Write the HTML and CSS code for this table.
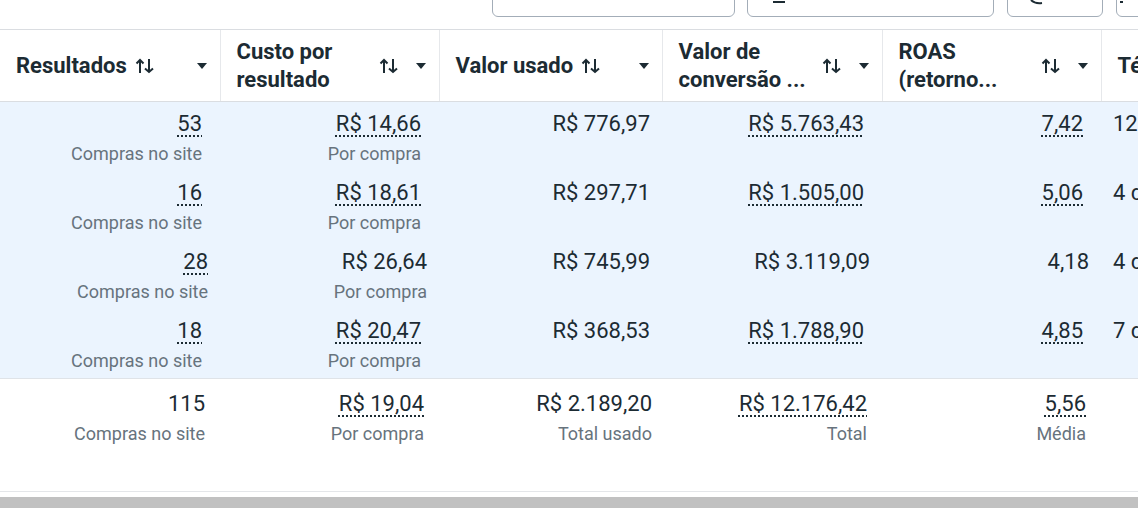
FILE: index.html
```html
<!DOCTYPE html>
<html lang="pt-BR">
<head>
    <meta charset="UTF-8">
    <meta name="viewport" content="width=device-width, initial-scale=1.0">
    <link rel="stylesheet" href="styles.css">
    <title>Relatório de anúncios</title>
</head>
<body>
    <div class="toolbar">
        <div class="tool-btn btn-wide"></div>
        <div class="tool-btn btn-wider">
            <svg class="peek peek-bar" width="14" height="4" viewBox="0 0 14 4"><rect x="0" y="0" width="12" height="2" fill="#1c2b33"/></svg>
        </div>
        <div class="tool-btn btn-small">
            <svg class="peek peek-curve" width="14" height="6" viewBox="0 0 14 6"><path d="M1 0 Q5 4 12 3" fill="none" stroke="#1c2b33" stroke-width="2"/></svg>
        </div>
        <div class="tool-btn btn-cut">
            <svg class="peek peek-dot" width="6" height="4" viewBox="0 0 6 4"><rect x="0" y="0" width="3" height="2" fill="#1c2b33"/></svg>
        </div>
    </div>

    <div class="table-wrap">
    <table class="report">
        <colgroup>
            <col style="width:220px">
            <col style="width:219px">
            <col style="width:223px">
            <col style="width:220px">
            <col style="width:219px">
            <col style="width:220px">
        </colgroup>
        <thead>
            <tr>
                <th>
                    <div class="head">
                        <span class="label">Resultados</span>
                        <svg class="sort" width="20" height="16" viewBox="0 0 20 16"><path d="M5 15V2M1.5 5.5L5 2l3.5 3.5M14 1v13M10 10.5l4 3.5 4-3.5" fill="none" stroke="#1c2b33" stroke-width="2"/></svg>
                        <svg class="caret" width="10" height="6" viewBox="0 0 10 6"><path d="M0 0h10L5 6z" fill="#1c2b33"/></svg>
                    </div>
                </th>
                <th>
                    <div class="head">
                        <span class="label wrap">Custo por<br>resultado</span>
                        <svg class="sort" width="20" height="16" viewBox="0 0 20 16"><path d="M5 15V2M1.5 5.5L5 2l3.5 3.5M14 1v13M10 10.5l4 3.5 4-3.5" fill="none" stroke="#1c2b33" stroke-width="2"/></svg>
                        <svg class="caret" width="10" height="6" viewBox="0 0 10 6"><path d="M0 0h10L5 6z" fill="#1c2b33"/></svg>
                    </div>
                </th>
                <th>
                    <div class="head">
                        <span class="label">Valor usado</span>
                        <svg class="sort" width="20" height="16" viewBox="0 0 20 16"><path d="M5 15V2M1.5 5.5L5 2l3.5 3.5M14 1v13M10 10.5l4 3.5 4-3.5" fill="none" stroke="#1c2b33" stroke-width="2"/></svg>
                        <svg class="caret" width="10" height="6" viewBox="0 0 10 6"><path d="M0 0h10L5 6z" fill="#1c2b33"/></svg>
                    </div>
                </th>
                <th>
                    <div class="head">
                        <span class="label wrap">Valor de<br>conversão ...</span>
                        <svg class="sort" width="20" height="16" viewBox="0 0 20 16"><path d="M5 15V2M1.5 5.5L5 2l3.5 3.5M14 1v13M10 10.5l4 3.5 4-3.5" fill="none" stroke="#1c2b33" stroke-width="2"/></svg>
                        <svg class="caret" width="10" height="6" viewBox="0 0 10 6"><path d="M0 0h10L5 6z" fill="#1c2b33"/></svg>
                    </div>
                </th>
                <th>
                    <div class="head">
                        <span class="label wrap">ROAS<br>(retorno...</span>
                        <svg class="sort" width="20" height="16" viewBox="0 0 20 16"><path d="M5 15V2M1.5 5.5L5 2l3.5 3.5M14 1v13M10 10.5l4 3.5 4-3.5" fill="none" stroke="#1c2b33" stroke-width="2"/></svg>
                        <svg class="caret" width="10" height="6" viewBox="0 0 10 6"><path d="M0 0h10L5 6z" fill="#1c2b33"/></svg>
                    </div>
                </th>
                <th>
                    <div class="head">
                        <span class="label">Término</span>
                    </div>
                </th>
            </tr>
        </thead>
        <tbody>
            <tr class="sel">
                <td class="inset"><div class="val"><span class="dot">53</span></div><div class="sub">Compras no site</div></td>
                <td class="inset"><div class="val"><span class="dot">R$ 14,66</span></div><div class="sub">Por compra</div></td>
                <td><div class="val">R$ 776,97</div></td>
                <td class="inset"><div class="val"><span class="dot">R$ 5.763,43</span></div></td>
                <td class="inset"><div class="val"><span class="dot">7,42</span></div></td>
                <td class="left"><div class="val">12 de dez. de 2023</div></td>
            </tr>
            <tr class="sel">
                <td class="inset"><div class="val"><span class="dot">16</span></div><div class="sub">Compras no site</div></td>
                <td class="inset"><div class="val"><span class="dot">R$ 18,61</span></div><div class="sub">Por compra</div></td>
                <td><div class="val">R$ 297,71</div></td>
                <td class="inset"><div class="val"><span class="dot">R$ 1.505,00</span></div></td>
                <td class="inset"><div class="val"><span class="dot">5,06</span></div></td>
                <td class="left"><div class="val">4 de dez. de 2023</div></td>
            </tr>
            <tr class="sel">
                <td><div class="val"><span class="dot">28</span></div><div class="sub">Compras no site</div></td>
                <td><div class="val">R$ 26,64</div><div class="sub">Por compra</div></td>
                <td><div class="val">R$ 745,99</div></td>
                <td><div class="val">R$ 3.119,09</div></td>
                <td><div class="val">4,18</div></td>
                <td class="left"><div class="val">4 de dez. de 2023</div></td>
            </tr>
            <tr class="sel last">
                <td class="inset"><div class="val"><span class="dot">18</span></div><div class="sub">Compras no site</div></td>
                <td class="inset"><div class="val"><span class="dot">R$ 20,47</span></div><div class="sub">Por compra</div></td>
                <td><div class="val">R$ 368,53</div></td>
                <td class="inset"><div class="val"><span class="dot">R$ 1.788,90</span></div></td>
                <td class="inset"><div class="val"><span class="dot">4,85</span></div></td>
                <td class="left"><div class="val">7 de dez. de 2023</div></td>
            </tr>
            <tr class="total">
                <td class="inset-sm"><div class="val">115</div><div class="sub">Compras no site</div></td>
                <td class="inset-sm"><div class="val"><span class="dot">R$ 19,04</span></div><div class="sub">Por compra</div></td>
                <td class="inset-xs"><div class="val">R$ 2.189,20</div><div class="sub">Total usado</div></td>
                <td class="inset-sm"><div class="val"><span class="dot">R$ 12.176,42</span></div><div class="sub">Total</div></td>
                <td class="inset-sm"><div class="val"><span class="dot">5,56</span></div><div class="sub">Média</div></td>
                <td class="left"></td>
            </tr>
        </tbody>
    </table>
    </div>

    <div class="scrollbar"></div>
</body>
</html>
```

FILE: styles.css
```css
body {
    margin: 0;
    width: 1138px;
    height: 508px;
    overflow: hidden;
    background: #fff;
    font-family: Roboto, "Liberation Sans", sans-serif;
    color: #1c2b33;
}

/* top toolbar, only the bottom of the buttons shows */
.toolbar {
    display: flex;
    align-items: flex-end;
    gap: 12px;
    height: 17px;
    padding-left: 492px;
    overflow: hidden;
}

.tool-btn {
    position: relative;
    flex: none;
    height: 40px;
    box-sizing: border-box;
    border: 1px solid #a3adb8;
    border-radius: 6px;
    background: #fff;
}

.btn-wide { width: 243px; }
.btn-wider { width: 247px; }
.btn-small { width: 96px; margin-left: 1px; }
.btn-cut { width: 60px; margin-left: 1px; }

.peek {
    position: absolute;
    top: 23px;
}
.peek-bar { left: 25px; }
.peek-curve { left: 22px; top: 22px; }
.peek-dot { left: 3px; top: 23px; }

/* table */
.table-wrap {
    margin-top: 12px;
    width: 1138px;
    overflow: hidden;
}

.report {
    border-collapse: collapse;
    table-layout: fixed;
    width: 1321px;
}

.report th {
    height: 70px;
    padding: 1px 13px 0 16px;
    border-top: 1px solid #dadde1;
    border-bottom: 1px solid #dadde1;
    border-left: 1px solid #e6e8eb;
    text-align: left;
    vertical-align: middle;
    background: #fff;
}

.report th:first-child {
    border-left: none;
}

.head {
    display: flex;
    align-items: center;
}

.label {
    flex: 0 1 auto;
    font-size: 22px;
    font-weight: 700;
    line-height: 28px;
    white-space: nowrap;
}

.label.wrap {
    flex: 1;
}

.sort {
    flex: none;
    margin-left: 8px;
}

.caret {
    flex: none;
    margin-left: auto;
    padding-left: 17px;
}

.report td {
    padding: 9px 12px 6px 0;
    text-align: right;
    vertical-align: top;
    white-space: nowrap;
}

.report td.inset { padding-right: 18px; }
.report td.left { text-align: left; padding-left: 12px; }

.sel td {
    background: #ebf4fe;
}

.sel.last td {
    border-bottom: 1px solid #dfe3e8;
}

.total td {
    padding-top: 12px;
    padding-bottom: 46px;
    border-bottom: 1px solid #e4e6e9;
}

.report .total td.inset-sm { padding-right: 15px; }
.report .total td.inset-xs { padding-right: 10px; }

.val {
    font-size: 22px;
    line-height: 26px;
}

.dot {
    text-decoration: underline dotted;
    text-decoration-thickness: 1.5px;
    text-underline-offset: 4px;
}

.sub {
    margin-top: 6px;
    font-size: 18px;
    line-height: 22px;
    color: #67737d;
}

.scrollbar {
    margin-top: 5px;
    height: 12px;
    background: #c1c1c1;
}
```
